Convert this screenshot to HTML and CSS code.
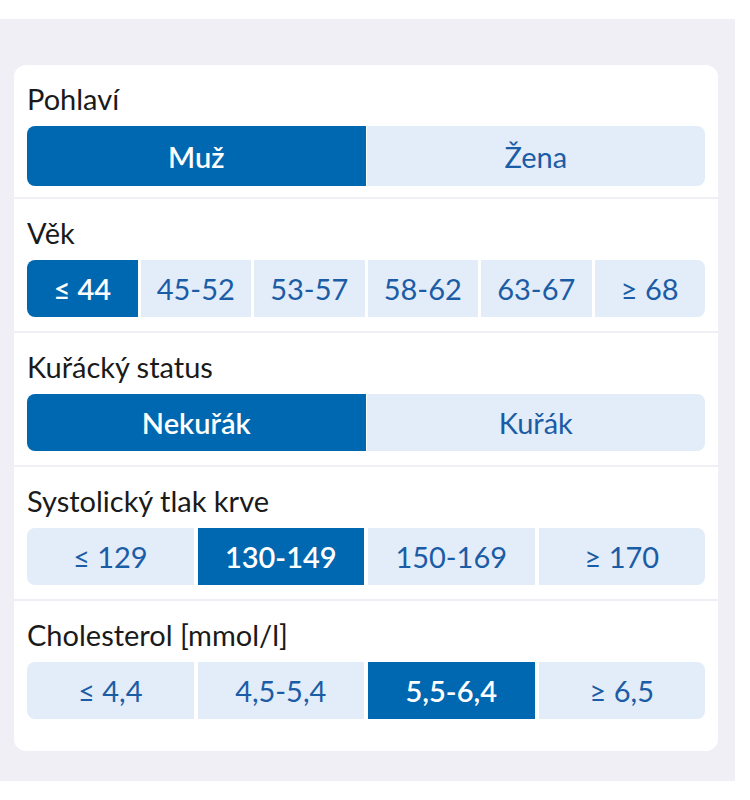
FILE: index.html
```html
<!DOCTYPE html>
<html lang="cs">
<head>
    <meta charset="UTF-8">
    <meta name="viewport" content="width=device-width, initial-scale=1.0">
    <title>Kalkulačka rizika</title>
    <link rel="stylesheet" href="styles.css">
</head>
<body>

    <div class="panel">
        <div class="card">
            <!-- Pohlaví -->
            <div class="section">
                <p class="label">Pohlaví</p>
                <div class="seg seg-2 tall">
                    <button class="seg-btn active">Muž</button>
                    <button class="seg-btn">Žena</button>
                </div>
            </div>

            <!-- Věk -->
            <div class="section">
                <p class="label">Věk</p>
                <div class="seg">
                    <button class="seg-btn active">≤ 44</button>
                    <button class="seg-btn">45-52</button>
                    <button class="seg-btn">53-57</button>
                    <button class="seg-btn">58-62</button>
                    <button class="seg-btn">63-67</button>
                    <button class="seg-btn">≥ 68</button>
                </div>
            </div>

            <!-- Kouření -->
            <div class="section">
                <p class="label">Kuřácký status</p>
                <div class="seg seg-2">
                    <button class="seg-btn active">Nekuřák</button>
                    <button class="seg-btn">Kuřák</button>
                </div>
            </div>

            <!-- Tlak -->
            <div class="section">
                <p class="label">Systolický tlak krve</p>
                <div class="seg seg-4">
                    <button class="seg-btn">≤ 129</button>
                    <button class="seg-btn active">130-149</button>
                    <button class="seg-btn">150-169</button>
                    <button class="seg-btn">≥ 170</button>
                </div>
            </div>

            <!-- Cholesterol -->
            <div class="section last">
                <p class="label">Cholesterol [mmol/l]</p>
                <div class="seg seg-4">
                    <button class="seg-btn">≤ 4,4</button>
                    <button class="seg-btn">4,5-5,4</button>
                    <button class="seg-btn active">5,5-6,4</button>
                    <button class="seg-btn">≥ 6,5</button>
                </div>
            </div>
        </div>
    </div>

    <script>
        document.querySelectorAll(".seg").forEach(group => {
            group.addEventListener("click", e => {
                const btn = e.target.closest(".seg-btn");
                if (!btn) return;
                group.querySelectorAll(".seg-btn").forEach(b => b.classList.remove("active"));
                btn.classList.add("active");
            });
        });
    </script>

</body>
</html>
```

FILE: styles.css
```css
body {
    margin: 0;
    padding-top: 19px;
    background-color: #ffffff;
    font-family: 'Lato', 'Noto Sans', sans-serif;
    color: #1a1a1a;
}

.panel {
    width: 735px;
    background-color: #efeff5;
    padding: 46px 17px 30px 14px;
    box-sizing: border-box;
}

.card {
    background: white;
    border-radius: 12px;
    overflow: hidden;
}

.section {
    padding: 17px 13px 14px 13px;
    border-bottom: 2px solid #efeff5;
}

.section.last {
    border-bottom: none;
    padding-bottom: 32px;
}

.label {
    margin: 0 0 10px 0;
    font-size: 29px;
    line-height: 34px;
}

.seg {
    display: flex;
    gap: 3px;
    height: 57px;
}

.seg.tall {
    height: 60px;
    margin-bottom: -3px;
}

.seg-2 {
    gap: 1px;
}

.seg-4 {
    gap: 4px;
}

.seg-btn {
    flex: 1;
    border: none;
    margin: 0;
    padding: 0;
    background-color: #e3ecf9;
    color: #1b5ca6;
    font-family: inherit;
    font-size: 29px;
    cursor: pointer;
}

.seg-btn:first-child {
    border-radius: 8px 0 0 8px;
}

.seg-btn:last-child {
    border-radius: 0 8px 8px 0;
}

.seg-btn.active {
    background-color: #0067b1;
    color: white;
    font-weight: 600;
}
```
